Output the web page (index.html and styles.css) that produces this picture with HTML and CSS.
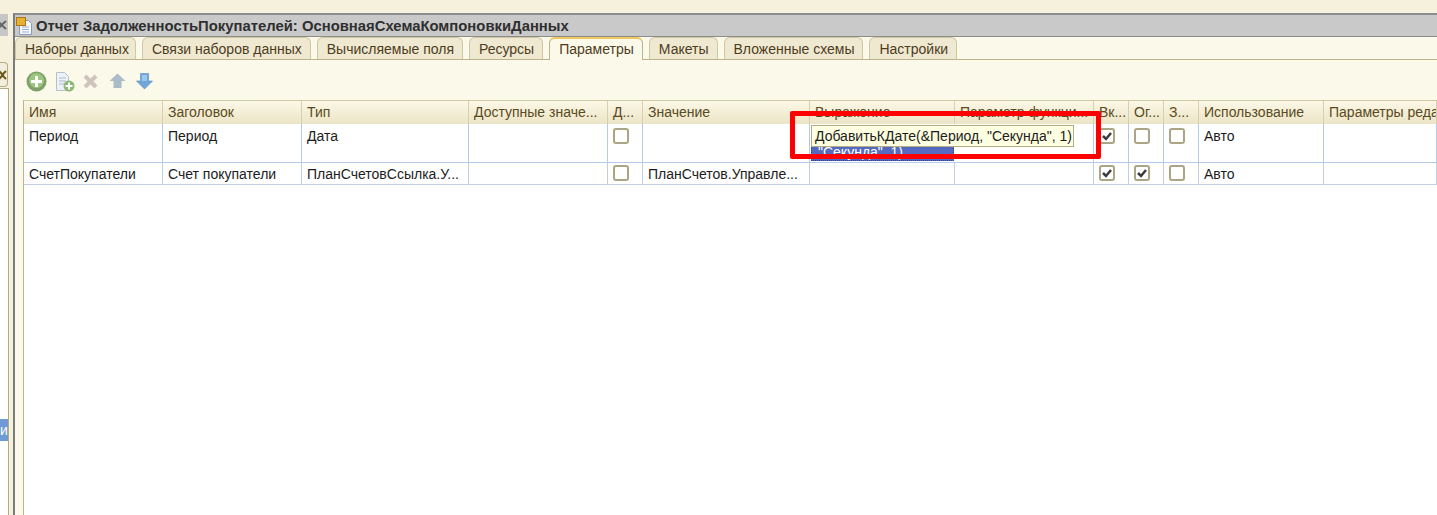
FILE: index.html
```html
<!DOCTYPE html>
<html lang="en">
<head>
  <meta charset="UTF-8">
  <meta name="viewport" content="width=device-width, initial-scale=1.0">
  <title>Отчет ЗадолженностьПокупателей</title>
  <link rel="stylesheet" href="styles.css">
</head>
<body>
  <div class="side">
    <div class="side-close"><svg width="8" height="22" viewBox="0 0 8 22"><path d="M6 7l-4.500 4L6 15M-3 7l5 4-5 4" fill="none" stroke="#666" stroke-width="2"/></svg></div>
    <div class="side-btn"><svg width="8" height="23" viewBox="0 0 8 23"><path d="M6 8l-4 4 4 4M-1 8l4 4-4 4" fill="none" stroke="#6a5a20" stroke-width="2"/></svg></div>
    <div class="side-panel">
      <div class="side-item">и</div>
    </div>
  </div>

  <div class="window">
    <div class="title">
      <svg class="title-icon" width="17" height="20" viewBox="0 0 17 20">
        <path d="M3.500 4.500h9l3 3v11h-12z" fill="#f4f7fb" stroke="#8a9bb0"/>
        <path d="M6 11h7M6 13.500h7M6 16h7" stroke="#9ab2cc"/>
        <rect x=".5" y="1.500" width="9" height="8" fill="#e8b030" stroke="#a87818"/>
      </svg>
      Отчет ЗадолженностьПокупателей: ОсновнаяСхемаКомпоновкиДанных
    </div>

    <div class="tabs">
      <div class="tab">Наборы данных</div>
      <div class="tab">Связи наборов данных</div>
      <div class="tab">Вычисляемые поля</div>
      <div class="tab">Ресурсы</div>
      <div class="tab active">Параметры</div>
      <div class="tab">Макеты</div>
      <div class="tab">Вложенные схемы</div>
      <div class="tab">Настройки</div>
    </div>

    <div class="pane">
      <div class="toolbar">
        <svg width="21" height="21" viewBox="0 0 21 21">
          <circle cx="10.500" cy="10.500" r="10" fill="#7fa068"/>
          <circle cx="10.500" cy="9.500" r="7.500" fill="#9cc67e"/>
          <path d="M10.500 5v11M5 10.500h11" stroke="#fff" stroke-width="3"/>
        </svg>
        <svg width="20" height="21" viewBox="0 0 20 21">
          <path d="M1.500 1.500h8l4 4v14h-12z" fill="#eef2f6" stroke="#b4c0cc"/>
          <path d="M4 7h7M4 10h7M4 13h5" stroke="#a8bccf"/>
          <circle cx="14" cy="15" r="5.500" fill="#8fb878"/>
          <path d="M14 11.500v7M10.500 15h7" stroke="#fff" stroke-width="2"/>
        </svg>
        <svg class="tool-x" width="15" height="15" viewBox="0 0 15 15">
          <path d="M2 2l11 11M13 2L2 13" stroke="#cfc4bc" stroke-width="4"/>
        </svg>
        <svg class="tool-up" width="17" height="16" viewBox="0 0 17 16">
          <path d="M8.500 .5L16.500 8h-4v7h-8V8h-4z" fill="#a9bcc8"/>
        </svg>
        <svg width="17" height="17" viewBox="0 0 17 17">
          <path d="M4.500 .5h8V8h4l-8 8-8-8h4z" fill="#6ea6dc" stroke="#5a86b0" stroke-width=".6"/>
          <path d="M6 2h5v6H6z" fill="#9cc8ef"/>
        </svg>
      </div>

      <div class="table">
        <div class="row head">
          <div class="cell">Имя</div>
          <div class="cell">Заголовок</div>
          <div class="cell">Тип</div>
          <div class="cell">Доступные значе...</div>
          <div class="cell">Д...</div>
          <div class="cell">Значение</div>
          <div class="cell">Выражение</div>
          <div class="cell">Параметр функци...</div>
          <div class="cell">Вк...</div>
          <div class="cell">Ог...</div>
          <div class="cell">З...</div>
          <div class="cell">Использование</div>
          <div class="cell">Параметры реда</div>
        </div>

        <div class="row first">
          <div class="cell">Период</div>
          <div class="cell">Период</div>
          <div class="cell">Дата</div>
          <div class="cell"></div>
          <div class="cell"><span class="box"></span></div>
          <div class="cell"></div>
          <div class="cell selected">"Секунда", 1)</div>
          <div class="cell"></div>
          <div class="cell"><span class="box"><svg class="tick" viewBox="0 0 12 12"><path d="M2 6l3 3 5-6"/></svg></span></div>
          <div class="cell"><span class="box"></span></div>
          <div class="cell"><span class="box"></span></div>
          <div class="cell">Авто</div>
          <div class="cell"></div>
        </div>

        <div class="row second">
          <div class="cell">СчетПокупатели</div>
          <div class="cell">Счет покупатели</div>
          <div class="cell">ПланСчетовСсылка.У...</div>
          <div class="cell"></div>
          <div class="cell"><span class="box"></span></div>
          <div class="cell">ПланСчетов.Управле...</div>
          <div class="cell"></div>
          <div class="cell"></div>
          <div class="cell"><span class="box"><svg class="tick" viewBox="0 0 12 12"><path d="M2 6l3 3 5-6"/></svg></span></div>
          <div class="cell"><span class="box"><svg class="tick" viewBox="0 0 12 12"><path d="M2 6l3 3 5-6"/></svg></span></div>
          <div class="cell"><span class="box"></span></div>
          <div class="cell">Авто</div>
          <div class="cell"></div>
        </div>
      </div>
    </div>
  </div>

  <div class="tooltip">ДобавитьКДате(&amp;Период, "Секунда", 1)</div>
  <div class="red-frame"></div>
</body>
</html>
```

FILE: styles.css
```css
html, body {
  height: 100%;
}
body {
  margin: 0;
  display: flex;
  overflow: hidden;
  background: #f5f1dd;
  color: #1c1c1c;
  font-family: "Liberation Sans", Arial, sans-serif;
  font-size: 14px;
}

/* left strip, mostly cut off */
.side {
  flex: 0 0 13px;
  display: flex;
  flex-direction: column;
  padding-top: 14px;
  box-sizing: border-box;
}
.side-close {
  width: 8px;
  height: 22px;
  background: #c6c6c6;
}
.side-btn {
  width: 8px;
  height: 25px;
  margin-top: 26px;
  background: #f3eedb;
  border: 1px solid #b5ab85;
  border-left: none;
  border-radius: 0 4px 4px 0;
  box-sizing: border-box;
}
.side-panel {
  flex: 1;
  width: 8px;
  margin-top: 1px;
  padding-top: 330px;
  background: #fff;
  border-right: 1px solid #b5ab85;
  border-top: 1px solid #b5ab85;
}
.side-item {
  height: 22px;
  line-height: 22px;
  background: #6f9ad6;
  color: #fff;
  overflow: hidden;
}

.window {
  flex: 1;
  min-width: 0;
  display: flex;
  flex-direction: column;
  margin-top: 13px;
  border-top: 2px solid #8c8c8c;
  border-left: 2px solid #7c7c7c;
}
.title {
  height: 21px;
  flex: none;
  display: flex;
  align-items: center;
  gap: 3px;
  padding-left: 1px;
  background: #c9c9c9;
  border-bottom: 1px solid #8c8c8c;
  color: #2f2f2f;
  font-weight: bold;
  font-size: 14.850px;
  white-space: nowrap;
}

.tabs {
  flex: none;
  display: flex;
  gap: 6px;
  height: 22px;
  background: #fbf9ea;
  border-bottom: 1px solid #bdb28c;
}
.tab {
  height: 22px;
  box-sizing: border-box;
  padding: 3px 8px 0 9px;
  background: #efe9d2;
  border: 1px solid #cfc6a2;
  border-bottom: none;
  border-radius: 6px 6px 0 0;
  color: #4e3c1c;
  line-height: 17px;
  white-space: nowrap;
}
.tab:first-child {
  padding-right: 6px;
}
.tab.active {
  height: 23px;
  background: #fbf9ea;
  border-color: #bdb28c;
  border-top: 2px solid #f0c860;
  padding-top: 2px;
}

.pane {
  flex: 1;
  min-height: 0;
  display: flex;
  flex-direction: column;
  padding-left: 8px;
  background: #fbf9ea;
}
.toolbar {
  flex: none;
  height: 40px;
  display: flex;
  align-items: center;
  gap: 8px;
  padding: 2px 0 0 3px;
  box-sizing: border-box;
}
.toolbar .tool-x {
  margin-right: 3px;
}
.toolbar .tool-up {
  margin-right: 2px;
}

.table {
  flex: 1;
  min-height: 0;
  overflow: hidden;
  background: #fff;
  border-left: 1px solid #bdb28c;
  border-top: 1px solid #cfc6a2;
}
.row {
  display: grid;
  grid-template-columns: 139px 139px 167px 139px 35px 167px 145px 139px 35px 35px 35px 125px 1fr;
}
.cell {
  box-sizing: border-box;
  padding: 0 5px;
  overflow: hidden;
  white-space: nowrap;
  border-right: 1px solid #b3cbe6;
}
.head {
  height: 23px;
  background: linear-gradient(to bottom, #fbf8e6, #ece4c6);
  color: #5a4a22;
  line-height: 23px;
}
.head .cell {
  border-right-color: #d8cfae;
}
.first {
  height: 38px;
  line-height: 24px;
  border-bottom: 1px solid #b3cbe6;
}
.second {
  height: 21px;
  line-height: 22px;
  border-bottom: 1px solid #c3cedc;
}
.second .cell {
  border-right-color: #c3cedc;
}

.box {
  display: block;
  box-sizing: border-box;
  width: 16px;
  height: 16px;
  margin-top: 4px;
  background: #fff;
  border: 2px solid #aba583;
  border-radius: 3px;
}
.second .box {
  margin-top: 2px;
}
.tick {
  display: block;
  width: 12px;
  height: 12px;
  fill: none;
  stroke: #3a3a42;
  stroke-width: 2.500;
}

.selected {
  margin: 22px 1px 0;
  padding: 0 6px;
  height: 15px;
  line-height: 10px;
  background: #5469c0;
  color: #fff;
  border: 1px dotted #2e3f90;
}

/* over the table */
.tooltip {
  position: absolute;
  left: 811px;
  top: 125px;
  width: 263px;
  height: 22px;
  box-sizing: border-box;
  padding-left: 3px;
  background: #ffffe1;
  border: 1px solid #b5ab85;
  line-height: 21px;
  white-space: nowrap;
}
.red-frame {
  position: absolute;
  left: 790px;
  top: 111px;
  width: 311px;
  height: 48px;
  box-sizing: border-box;
  border: 5px solid #f00;
  border-radius: 2px;
}
```
